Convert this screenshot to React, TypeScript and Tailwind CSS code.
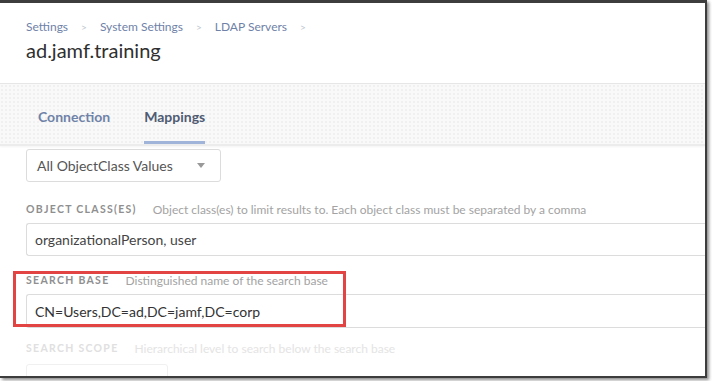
export default function App() {
  return (
    <div className="w-[712px] h-[381px] bg-white overflow-hidden font-['Lato',sans-serif]">
      {/* window frame */}
      <div className="relative w-[707px] h-[378px] border-t-[3px] border-r-2 border-b-2 border-[#3d3d3d] shadow-[2px_2px_3px_rgba(0,0,0,0.45)] overflow-hidden bg-white">
        {/* HEADER */}
        <div className="h-[81px] px-[26px] pt-[15px] border-b border-[#e6e6e6]">
          <div className="flex items-center text-[12px] text-[#6f82a8]">
            <span>Settings</span>
            <span className="mx-[13px] text-[#c0c6d0] text-[10px]">&gt;</span>
            <span>System Settings</span>
            <span className="mx-[13px] text-[#c0c6d0] text-[10px]">&gt;</span>
            <span>LDAP Servers</span>
            <span className="mx-[13px] text-[#c0c6d0] text-[10px]">&gt;</span>
          </div>
          <h1 className="mt-[1px] text-[20px] leading-[26px] text-[#2f2f2f]">ad.jamf.training</h1>
        </div>

        {/* TABS */}
        <div className="h-[62px] bg-[#f9f9f9] bg-[radial-gradient(#f0f0f0_1px,transparent_1.5px)] bg-[size:4px_4px] border-b-2 border-[#ececec] flex px-[38px] shadow-[0_1px_2px_rgba(0,0,0,0.05)]">
          <div className="h-full flex items-center pt-[8px] text-[14px] font-bold text-[#6f82a8] mr-[34px] border-b-[3px] border-transparent">Connection</div>
          <div className="h-full flex items-center pt-[8px] text-[14px] font-bold text-[#4f5b73] border-b-[3px] border-[#9fb4d8]">Mappings</div>
        </div>

        {/* FORM */}
        <div className="pl-[26px]">
          <div className="mt-[3px] w-[195px] h-[33px] border border-[#dcdcdc] rounded-[3px] flex items-center justify-between pl-[10px] pr-[15px]">
            <span className="text-[14px] text-[#555]">All ObjectClass Values</span>
            <span className="w-0 h-0 border-l-[4px] border-r-[4px] border-t-[5px] border-l-transparent border-r-transparent border-t-[#999]"></span>
          </div>

          <div className="mt-[21px] flex items-center h-[14px] whitespace-nowrap">
            <span className="text-[10.5px] font-bold tracking-[1.3px] text-[#8f8f8f]">OBJECT CLASS(ES)</span>
            <span className="ml-[16px] text-[12px] text-[#a3a3a3]">Object class(es) to limit results to. Each object class must be separated by a comma</span>
          </div>
          <div className="mt-[6px] h-[33px] border border-[#dcdcdc] border-r-0 rounded-l-[3px] flex items-center pl-[8px] text-[14px] text-[#444]">
            organizationalPerson, user
          </div>

          <div className="mt-[18px] flex items-center h-[14px] whitespace-nowrap">
            <span className="text-[10.5px] font-bold tracking-[1.3px] text-[#8f8f8f]">SEARCH BASE</span>
            <span className="ml-[16px] text-[12px] text-[#a3a3a3]">Distinguished name of the search base</span>
          </div>
          <div className="mt-[6px] h-[34px] border border-[#dcdcdc] border-r-0 rounded-l-[3px] flex items-center pl-[8px] text-[14px] text-[#333]">
            CN=Users,DC=ad,DC=jamf,DC=corp
          </div>

          <div className="mt-[14px] flex items-center h-[14px] whitespace-nowrap">
            <span className="text-[10.5px] font-bold tracking-[1.3px] text-[#e0e0e0]">SEARCH SCOPE</span>
            <span className="ml-[16px] text-[12px] text-[#e4e4e4]">Hierarchical level to search below the search base</span>
          </div>
          <div className="mt-[8px] w-[142px] h-[33px] border border-[#f0f0f0] rounded-[3px]"></div>
        </div>

        {/* annotation */}
        <div className="absolute left-[13px] top-[268px] w-[333px] h-[56px] border-[3px] border-[#e24444]"></div>
      </div>
    </div>
  );
}
